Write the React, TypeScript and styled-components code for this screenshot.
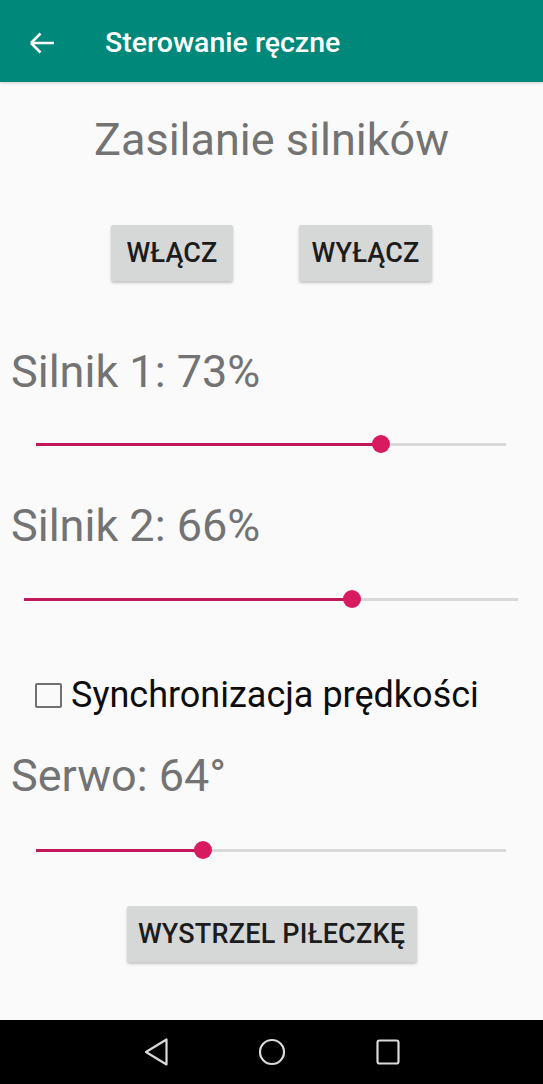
import styled, { createGlobalStyle } from "styled-components";

const GlobalStyle = createGlobalStyle`
  html, body {
    margin: 0;
    padding: 0;
    background: #fafafa;
  }
  body {
    font-family: Roboto, "Noto Sans", "Liberation Sans", sans-serif;
  }
  * {
    box-sizing: border-box;
  }
`;

const Screen = styled.div`
  width: 543px;
  height: 1084px;
  display: flex;
  flex-direction: column;
  background: #fafafa;
  overflow: hidden;
`;

const AppBar = styled.header`
  position: relative;
  z-index: 1;
  flex: none;
  height: 82px;
  display: flex;
  align-items: center;
  padding: 4px 0 0 29px;
  background: #00897b;
  box-shadow: 0 1px 3px rgba(0, 0, 0, 0.18);
`;

const BackButton = styled.svg`
  flex: none;
  display: block;
`;

const Title = styled.h1`
  margin: 0 0 0 50px;
  font-size: 28.5px;
  line-height: 28px;
  font-weight: 500;
  color: #ffffff;
`;

const Content = styled.main`
  flex: 1;
  display: flex;
  flex-direction: column;
`;

const Heading = styled.h2`
  margin: 35px 0 0;
  font-size: 45px;
  line-height: 45px;
  font-weight: 400;
  color: #737373;
  text-align: center;
`;

const Label = styled.div<{ $mt: number }>`
  margin-top: ${(p) => p.$mt}px;
  padding-left: 11px;
  font-size: 45px;
  line-height: 45px;
  font-weight: 400;
  color: #737373;
`;

const ButtonRow = styled.div`
  display: flex;
  justify-content: center;
  gap: 66px;
  margin-top: 63px;
`;

const ActionButton = styled.button<{ $w: number; $mt?: number }>`
  align-self: center;
  width: ${(p) => p.$w}px;
  height: 56px;
  margin-top: ${(p) => p.$mt ?? 0}px;
  padding: 0;
  border: none;
  border-radius: 2px;
  background: #d6d7d7;
  box-shadow: 0 2px 3px rgba(0, 0, 0, 0.22);
  font-family: Roboto, "Noto Sans", sans-serif;
  font-size: 27px;
  letter-spacing: 0.2px;
  font-weight: 500;
  color: #1c1c1c;
`;

const Slider = styled.div<{ $mt: number; $left: number; $right: number }>`
  display: flex;
  align-items: center;
  height: 30px;
  margin: ${(p) => p.$mt}px ${(p) => p.$right}px 0 ${(p) => p.$left}px;
`;

const ActiveTrack = styled.div`
  flex: none;
  height: 3px;
  background: #c2185b;
`;

const Thumb = styled.div`
  position: relative;
  z-index: 1;
  flex: none;
  width: 18px;
  height: 18px;
  margin: 0 -9px;
  border-radius: 50%;
  background: #d81b60;
`;

const RestTrack = styled.div`
  flex: 1;
  height: 3px;
  background: #d9d9d9;
`;

const CheckRow = styled.label`
  display: flex;
  align-items: center;
  gap: 9px;
  margin-top: 63px;
  padding-left: 35px;
`;

const CheckBox = styled.span`
  flex: none;
  width: 27px;
  height: 25px;
  border: 2px solid #707070;
  border-radius: 2px;
`;

const CheckText = styled.span`
  font-size: 36px;
  line-height: 36px;
  color: #0d0d0d;
`;

const NavBar = styled.nav`
  flex: none;
  height: 64px;
  display: flex;
  justify-content: center;
  align-items: center;
  gap: 86px;
  background: #000000;
`;

const NavIcon = styled.svg`
  display: block;
  width: 30px;
  height: 30px;
  fill: none;
  stroke: #d9d9d9;
  stroke-width: 2.2;
  stroke-linejoin: round;
`;

function RangeSlider({
  value,
  mt,
  left,
  right,
}: {
  value: number;
  mt: number;
  left: number;
  right: number;
}) {
  return (
    <Slider $mt={mt} $left={left} $right={right}>
      <ActiveTrack style={{ width: `${value * 100}%` }} />
      <Thumb />
      <RestTrack />
    </Slider>
  );
}

export default function App() {
  return (
    <Screen>
      <GlobalStyle />
      <AppBar>
        <BackButton width="26" height="22" viewBox="0 0 26 22">
          <path
            d="M2 11H25M2 11L11.5 1.5M2 11L11.5 20.5"
            stroke="#ffffff"
            strokeWidth="2.6"
            fill="none"
          />
        </BackButton>
        <Title>Sterowanie ręczne</Title>
      </AppBar>

      <Content>
        <Heading>Zasilanie silników</Heading>

        <ButtonRow>
          <ActionButton $w={122}>WŁĄCZ</ActionButton>
          <ActionButton $w={133}>WYŁĄCZ</ActionButton>
        </ButtonRow>

        <Label $mt={68}>Silnik 1: 73%</Label>
        <RangeSlider value={0.734} mt={35} left={36} right={37} />

        <Label $mt={44}>Silnik 2: 66%</Label>
        <RangeSlider value={0.664} mt={36} left={24} right={25} />

        <CheckRow>
          <CheckBox />
          <CheckText>Synchronizacja prędkości</CheckText>
        </CheckRow>

        <Label $mt={40}>Serwo: 64°</Label>
        <RangeSlider value={0.356} mt={37} left={36} right={37} />

        <ActionButton $w={290} $mt={41}>
          WYSTRZEL PIŁECZKĘ
        </ActionButton>
      </Content>

      <NavBar>
        <NavIcon viewBox="0 0 30 30">
          <path d="M5 15L25.5 2.5V27.5Z" />
        </NavIcon>
        <NavIcon viewBox="0 0 30 30">
          <circle cx="15" cy="15" r="12" />
        </NavIcon>
        <NavIcon viewBox="0 0 30 30">
          <rect x="4.5" y="3.5" width="21" height="23" rx="2" />
        </NavIcon>
      </NavBar>
    </Screen>
  );
}
